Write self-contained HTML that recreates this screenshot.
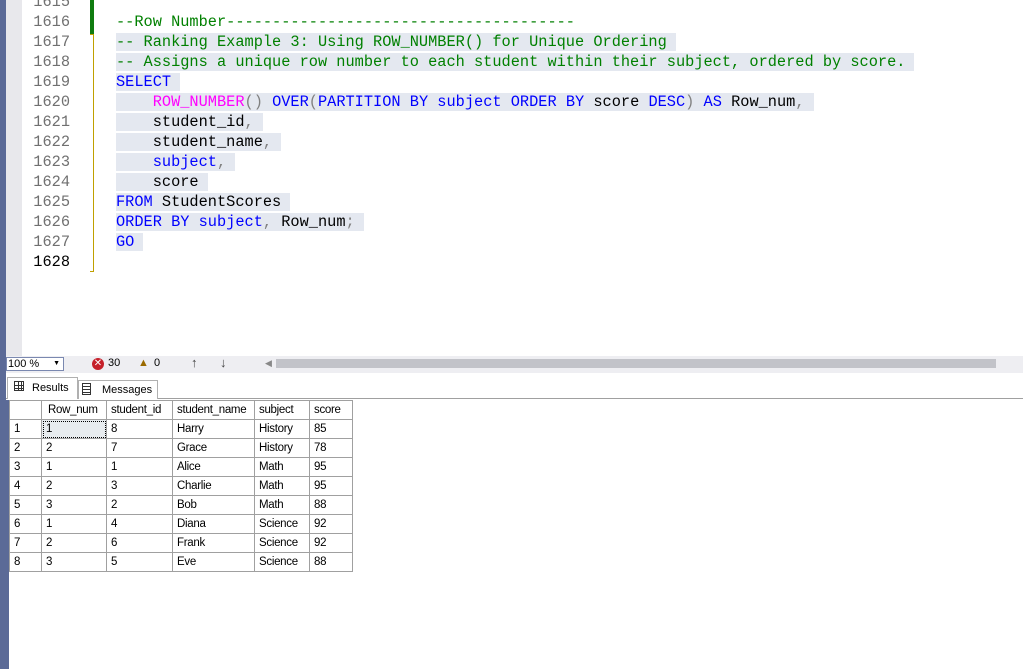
<!DOCTYPE html>
<html><head><meta charset="utf-8"><style>
body{margin:0;width:1023px;height:669px;overflow:hidden;background:#fff;position:relative;font-family:"Liberation Sans",sans-serif}
.a{position:absolute}
.code{position:absolute;left:116px;top:-8px;font-family:"Liberation Mono",monospace;font-size:15.3px;line-height:20px}
.code div{height:20px;white-space:pre}
.code span.h{background:#e4e8f0;padding-right:9px}
.c{color:#008000}.k{color:#0000ff}.m{color:#ff00ff}.g{color:#808080}.t{color:#000}
.ln{position:absolute;left:30px;width:40px;text-align:right;font-family:"Liberation Mono",monospace;font-size:15.3px;line-height:20px;color:#707070}
table{border-collapse:collapse;font-size:11.5px;letter-spacing:-0.3px}
td{border:1px solid #a0a0a0;height:19px;padding:0 0 0 4px;box-sizing:border-box}
</style></head><body>
<div class="a" style="left:0;top:0;width:6px;height:669px;background:#5b6a97"></div>
<div class="a" style="left:6px;top:0;width:16px;height:356px;background:#e8e8ec"></div>
<div class="a" style="left:6px;top:400px;width:3px;height:269px;background:#5b6a97"></div>
<div class="a" style="left:90px;top:0;width:4px;height:34px;background:#107c10"></div>
<div class="a" style="left:90px;top:34px;height:238px;border:1px solid #c0a000;border-left:0;box-sizing:border-box;width:4px"></div>
<div class="ln" style="top:-8px">1615<br>1616<br>1617<br>1618<br>1619<br>1620<br>1621<br>1622<br>1623<br>1624<br>1625<br>1626<br>1627<br><span style="color:#000">1628</span></div>
<div class="code"><div></div><div class="c">--Row Number--------------------------------------</div><div><span class="h c">-- Ranking Example 3: Using ROW_NUMBER() for Unique Ordering</span></div><div><span class="h c">-- Assigns a unique row number to each student within their subject, ordered by score.</span></div><div><span class="h k">SELECT</span></div><div><span class="h">    <span class="m">ROW_NUMBER</span><span class="g">()</span> <span class="k">OVER</span><span class="g">(</span><span class="k">PARTITION BY subject ORDER BY</span> score <span class="k">DESC</span><span class="g">)</span> <span class="k">AS</span> Row_num<span class="g">,</span></span></div><div><span class="h">    student_id<span class="g">,</span></span></div><div><span class="h">    student_name<span class="g">,</span></span></div><div><span class="h">    <span class="k">subject</span><span class="g">,</span></span></div><div><span class="h">    score</span></div><div><span class="h"><span class="k">FROM</span> StudentScores</span></div><div><span class="h"><span class="k">ORDER BY subject</span><span class="g">,</span> Row_num<span class="g">;</span></span></div><div><span class="h k">GO</span></div></div>
<div class="a" style="left:6px;top:356px;width:1017px;height:17px;background:#eeeef2"></div>
<div class="a" style="left:6px;top:357px;width:58px;height:14px;background:#fff;border:1px solid #7a88b0;box-sizing:border-box;font-size:11px;line-height:12px;padding-left:1px">100 %<span style="position:absolute;right:3px;font-size:7px">▼</span></div>
<div class="a" style="left:92px;top:358px;width:12px;height:12px;border-radius:6px;background:#c5202a;color:#fff;font-size:10px;line-height:12px;text-align:center">✕</div>
<div class="a" style="left:108px;top:357px;font-size:11px">30</div>
<div class="a" style="left:138px;top:357px;font-size:11px;color:#9a6a00">▲</div>
<div class="a" style="left:154px;top:357px;font-size:11px">0</div>
<div class="a" style="left:191px;top:355px;font-size:13px;color:#444">↑</div>
<div class="a" style="left:220px;top:355px;font-size:13px;color:#444">↓</div>
<div class="a" style="left:265px;top:358px;font-size:9px;color:#888">◀</div>
<div class="a" style="left:276px;top:359px;width:720px;height:9px;background:#c2c3c9"></div>
<div class="a" style="left:6px;top:398px;width:1017px;height:1px;background:#a0a0a0"></div>
<div class="a" style="left:7px;top:377px;width:71px;height:22px;background:#fff;border:1px solid #b0b0b0;border-bottom:0;box-sizing:border-box;font-size:11px;line-height:20px;padding-left:24px">Results</div>
<div class="a" style="left:14px;top:381px;width:10px;height:10px;border:1px solid #333;box-sizing:border-box;background:linear-gradient(90deg,transparent 3px,#333 3px,#333 4px,transparent 4px,transparent 6px,#333 6px,#333 7px,transparent 7px),linear-gradient(transparent 3px,#333 3px,#333 4px,transparent 4px,transparent 6px,#333 6px,#333 7px,transparent 7px)"></div>
<div class="a" style="left:78px;top:380px;width:80px;height:19px;background:#fff;border:1px solid #b0b0b0;border-bottom:0;box-sizing:border-box;font-size:11px;line-height:19px;padding-left:23px">Messages</div>
<div class="a" style="left:82px;top:383px;width:9px;height:12px;border:1px solid #333;box-sizing:border-box;background:repeating-linear-gradient(transparent 0 2px,#333 2px 3px)"></div>
<table class="a" style="left:9px;top:400px">
<tr><td style="width:32px"></td><td style="width:65px;padding-left:6px">Row_num</td><td style="width:66px">student_id</td><td style="width:82px">student_name</td><td style="width:55px">subject</td><td style="width:43px">score</td></tr>
<tr><td>1</td><td style="background:#e8ecef;outline:1px dotted #000;outline-offset:-2px">1</td><td>8</td><td>Harry</td><td>History</td><td>85</td></tr>
<tr><td>2</td><td>2</td><td>7</td><td>Grace</td><td>History</td><td>78</td></tr>
<tr><td>3</td><td>1</td><td>1</td><td>Alice</td><td>Math</td><td>95</td></tr>
<tr><td>4</td><td>2</td><td>3</td><td>Charlie</td><td>Math</td><td>95</td></tr>
<tr><td>5</td><td>3</td><td>2</td><td>Bob</td><td>Math</td><td>88</td></tr>
<tr><td>6</td><td>1</td><td>4</td><td>Diana</td><td>Science</td><td>92</td></tr>
<tr><td>7</td><td>2</td><td>6</td><td>Frank</td><td>Science</td><td>92</td></tr>
<tr><td>8</td><td>3</td><td>5</td><td>Eve</td><td>Science</td><td>88</td></tr>
</table>
</body></html>
